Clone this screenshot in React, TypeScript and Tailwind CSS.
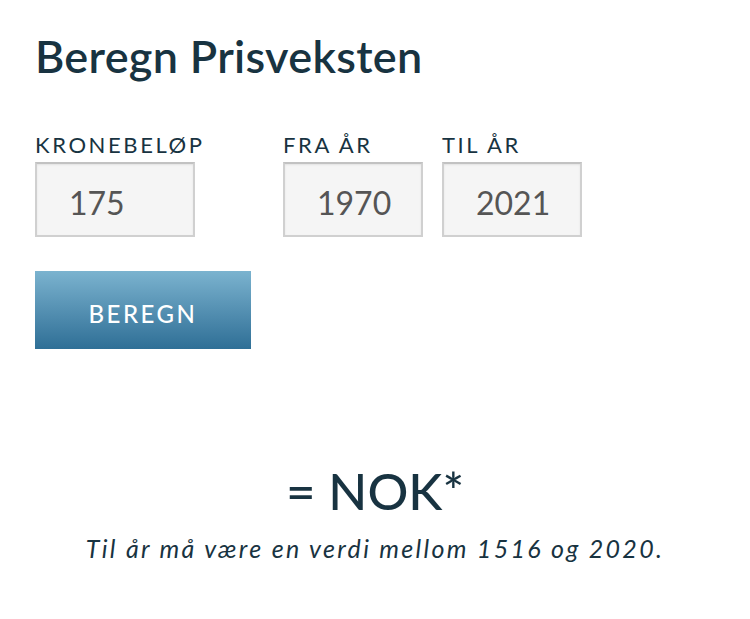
export default function App() {
  return (
    <div className="w-[750px] h-[619px] bg-white font-['Lato',sans-serif] text-[#183341]">
      <div className="px-[35px] pt-[26px]">
        <h1 className="text-[45px] font-semibold leading-[60px] tracking-[0.3px]">Beregn Prisveksten</h1>

        <div className="flex mt-[46px]">
          <div className="w-[248px]">
            <label className="block text-[22px] leading-[26px] tracking-[2.6px] uppercase">Kronebeløp</label>
            <div className="mt-[4px] w-[160px] h-[75px] bg-[#f5f5f5] border-2 border-[#d0d0d0] border-t-[#c2c2c2] shadow-[inset_0_1px_2px_rgba(0,0,0,0.08)] flex items-center pl-[32px] pt-[6px] text-[32px] text-[#555]">
              175
            </div>
          </div>
          <div className="w-[159px]">
            <label className="block text-[22px] leading-[26px] tracking-[2.6px] uppercase">Fra år</label>
            <div className="mt-[4px] w-[140px] h-[75px] bg-[#f5f5f5] border-2 border-[#d0d0d0] border-t-[#c2c2c2] shadow-[inset_0_1px_2px_rgba(0,0,0,0.08)] flex items-center pl-[32px] pt-[6px] text-[32px] text-[#555]">
              1970
            </div>
          </div>
          <div className="w-[140px]">
            <label className="block text-[22px] leading-[26px] tracking-[2.6px] uppercase">Til år</label>
            <div className="mt-[4px] w-[140px] h-[75px] bg-[#f5f5f5] border-2 border-[#d0d0d0] border-t-[#c2c2c2] shadow-[inset_0_1px_2px_rgba(0,0,0,0.08)] flex items-center pl-[32px] pt-[6px] text-[32px] text-[#555]">
              2021
            </div>
          </div>
        </div>

        <button className="mt-[34px] w-[216px] h-[78px] pt-[8px] bg-gradient-to-b from-[#7bb3cf] to-[#2e6f96] text-white text-[24px] tracking-[2.5px] font-medium">
          BEREGN
        </button>
      </div>

      <div className="mt-[112px] text-center">
        <div className="text-[51px] font-medium leading-[60px]">= NOK*</div>
        <p className="mt-[12px] text-[25px] italic tracking-[2.3px] leading-[30px]">Til år må være en verdi mellom 1516 og 2020.</p>
      </div>
    </div>
  )
}
